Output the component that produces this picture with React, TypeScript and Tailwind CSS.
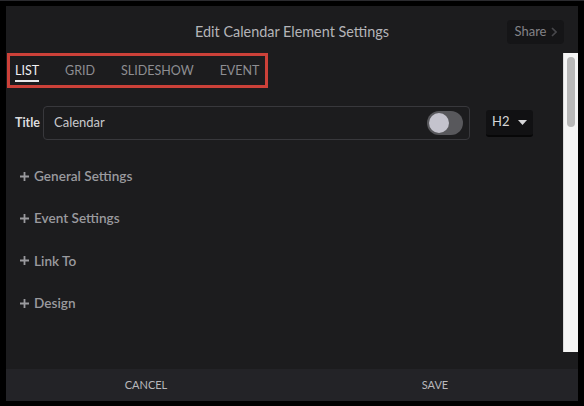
import React from 'react';

/* ------------------------------------------------------------------ */
/*  Config                                                             */
/* ------------------------------------------------------------------ */

const TABS = ['LIST', 'GRID', 'SLIDESHOW', 'EVENT'];
const SECTIONS = ['General Settings', 'Event Settings', 'Link To', 'Design'];

const FONT = { fontFamily: 'Lato, "Open Sans", "Liberation Sans", sans-serif' };

/* ------------------------------------------------------------------ */
/*  Small parts                                                        */
/* ------------------------------------------------------------------ */

function Toggle() {
  return (
    <div className="w-[36px] h-[24px] rounded-full bg-[#58585c] flex items-center pl-[2px]">
      <div className="w-[20px] h-[20px] rounded-full bg-[#c4c3cd]" />
    </div>
  );
}

function HeadingSelect() {
  return (
    <div className="ml-[16px] w-[47px] h-[27px] rounded-[3px] bg-[#111113] border-b-2 border-[#070708] flex items-center justify-between pl-[6px] pr-[6px] text-[13px] text-[#d6d6d8]">
      <span>H2</span>
      <svg width="9" height="5" viewBox="0 0 9 5">
        <path d="M0 0 L9 0 L4.5 5 Z" fill="#d6d6d8" />
      </svg>
    </div>
  );
}

/* ------------------------------------------------------------------ */
/*  App                                                                */
/* ------------------------------------------------------------------ */

export default function App() {
  return (
    <div
      className="w-[584px] h-[406px] bg-black border-t border-[#2b2b2f] pt-[5px] pl-[6px] pr-[6px] pb-[5px]"
      style={FONT}
    >
      <div className="h-full flex flex-col bg-[#1c1c1e]">
        {/* Header */}
        <div className="h-[47px] shrink-0 grid grid-cols-[1fr_auto_1fr] items-start pt-[14px]">
          <div />
          <div className="h-[24px] leading-[24px] text-[14.4px] text-[#b4b4b8]">
            Edit Calendar Element Settings
          </div>
          <div className="justify-self-end mr-[14px] h-[24px] w-[57px] rounded-[4px] bg-[#151517] flex items-center justify-center gap-[4px] text-[13px] text-[#838387]">
            <span>Share</span>
            <svg width="6" height="10" viewBox="0 0 6 10">
              <path d="M1 1 L5 5 L1 9" stroke="#47474b" strokeWidth="1.6" fill="none" />
            </svg>
          </div>
        </div>

        {/* Body */}
        <div className="h-[299px] shrink-0 flex">
          <div className="flex-1 flex flex-col">
            {/* Tabs */}
            <div className="ml-[1px] w-[261px] h-[35px] border-[3px] border-[#cc4139] flex items-center pl-[5px] gap-[26px] text-[12.5px]">
              {TABS.map((t, i) => (
                <span
                  key={t}
                  className={
                    i === 0
                      ? 'text-[#f0f0f2] border-b-2 border-[#e8e8ea] pb-[1px] mt-[3px] leading-[16px]'
                      : 'text-[#8e8e92] leading-[16px]'
                  }
                >
                  {t}
                </span>
              ))}
            </div>

            {/* Title row */}
            <div className="mt-[18px] pl-[9px] flex items-center">
              <span className="text-[12.5px] font-bold text-[#dcdcde] w-[28px]">Title</span>
              <div className="w-[427px] h-[34px] rounded-[4px] border border-[#38383c] flex items-center justify-between pl-[10px] pr-[6px]">
                <span className="text-[13px] text-[#c8c8cc]">Calendar</span>
                <Toggle />
              </div>
              <HeadingSelect />
            </div>

            {/* Sections */}
            <div className="mt-[15px] pl-[14px] flex flex-col">
              {SECTIONS.map(s => (
                <div key={s} className="h-[42.3px] flex items-center gap-[5px] text-[13.6px] font-semibold text-[#9a9a9e]">
                  <svg width="9" height="9" viewBox="0 0 9 9">
                    <path d="M4.5 0 V9 M0 4.5 H9" stroke="#9a9a9e" strokeWidth="1.8" />
                  </svg>
                  <span>{s}</span>
                </div>
              ))}
            </div>
          </div>

          {/* Scrollbar */}
          <div className="w-[15px] bg-[#f5f5f5] border-l border-[#dcdcdc] pt-[4px] flex justify-center">
            <div className="w-[8px] h-[70px] rounded-full bg-[#b8b8b8]" />
          </div>
        </div>

        {/* Footer */}
        <div className="mt-auto h-[32px] grid grid-cols-2 bg-[#232327] text-[11px] text-[#b8b8bc]">
          <div className="flex items-center justify-center pr-[6px]">CANCEL</div>
          <div className="flex items-center justify-center">SAVE</div>
        </div>
      </div>
    </div>
  );
}
